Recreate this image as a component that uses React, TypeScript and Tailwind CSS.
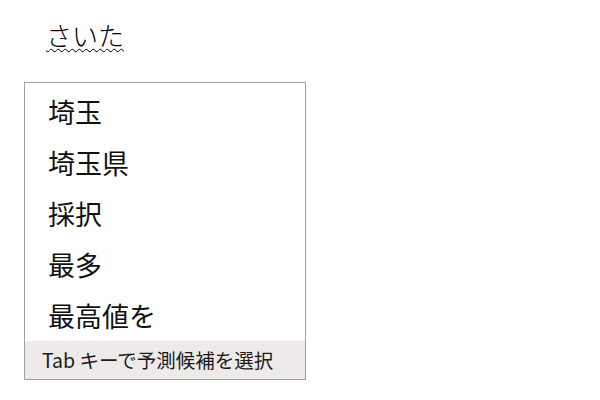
const candidates = ['埼玉', '埼玉県', '採択', '最多', '最高値を']

export default function App() {
  return (
    <div
      className="h-[400px] w-[600px] bg-white pl-[24px] pt-[18px] text-black"
      style={{ fontFamily: '"Noto Sans CJK JP", "Noto Sans", sans-serif' }}
    >
      <div className="ml-[22px] h-[40px] text-[26px] font-light leading-[34px] underline decoration-wavy decoration-1 underline-offset-[2px]">
        さいた
      </div>

      <div className="mt-[24px] w-[282px] border border-[#a0a0a0] bg-white">
        <ul className="pt-[3px]">
          {candidates.map((c) => (
            <li key={c} className="flex h-[51px] items-center pl-[23px] text-[27px] font-normal leading-none text-[#111]">
              {c}
            </li>
          ))}
        </ul>
        <div className="flex h-[38px] items-center bg-[#eeeaea] pl-[17px] text-[19.5px] leading-none text-[#1a1a1a]">
          Tab キーで予測候補を選択
        </div>
      </div>
    </div>
  )
}
